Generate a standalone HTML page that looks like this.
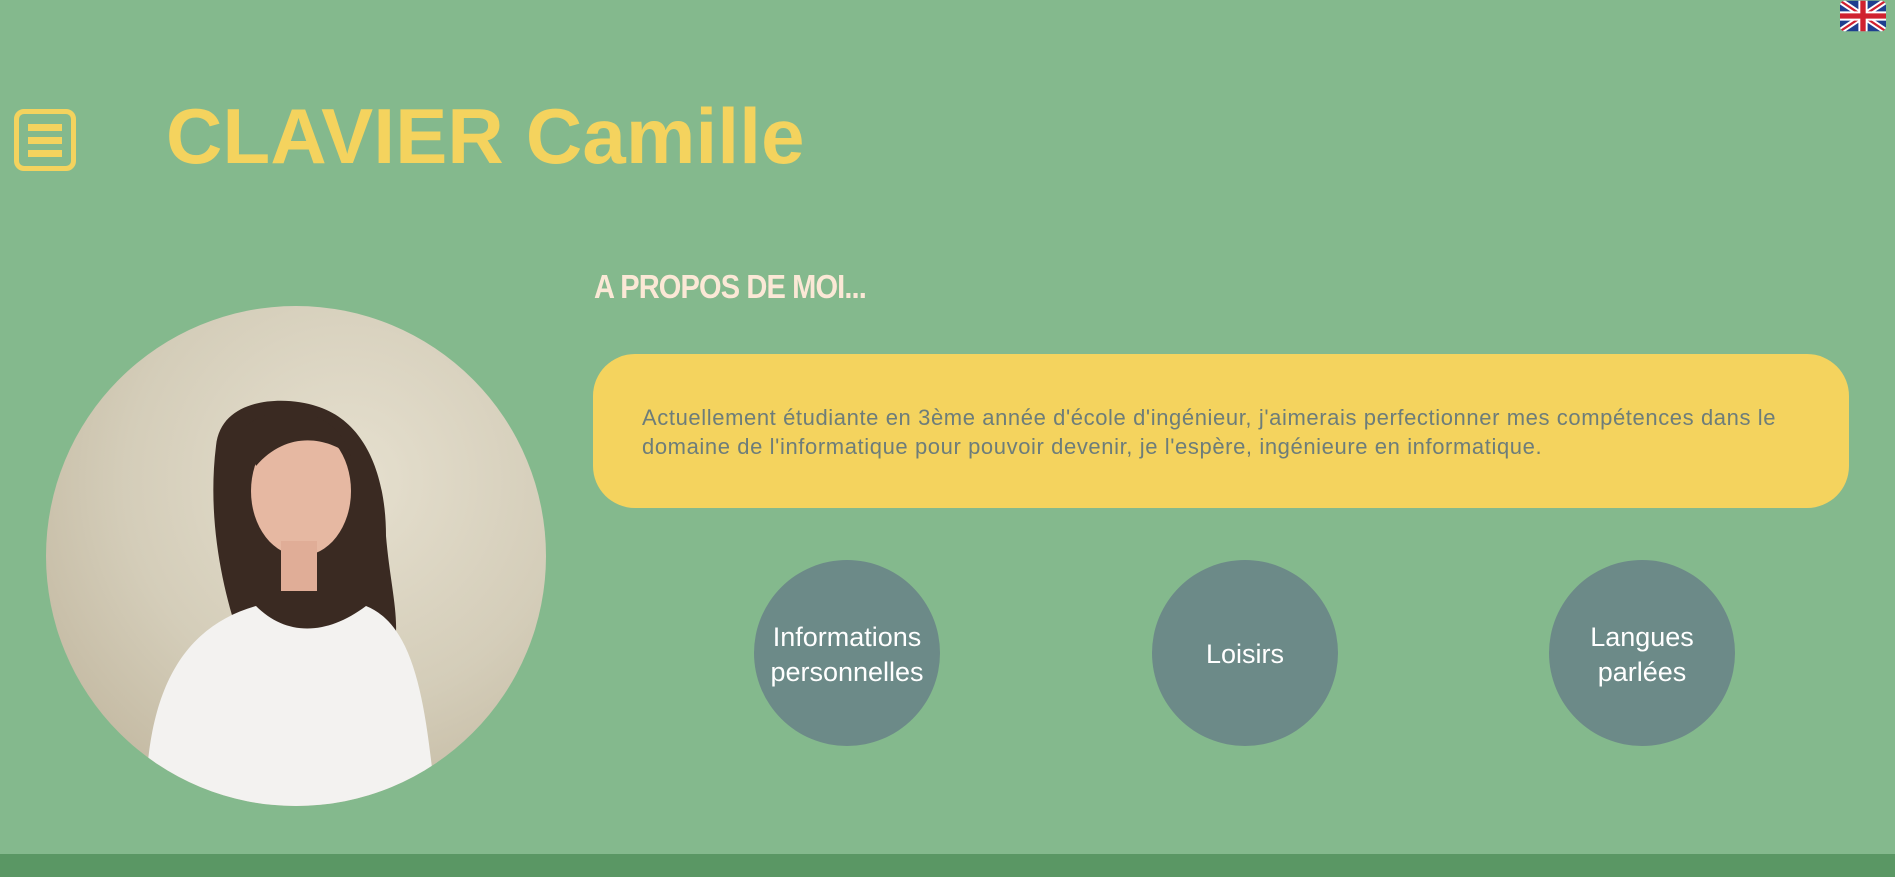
<!DOCTYPE html>
<html><head><meta charset="utf-8"><style>
html,body{margin:0;padding:0}
body{width:1895px;height:877px;background:#84b98d;position:relative;overflow:hidden;font-family:"Liberation Sans","DejaVu Sans",sans-serif}
.abs{position:absolute}
.menu{left:14px;top:109px;width:62px;height:62px;border:5px solid #f4d35e;border-radius:10px;box-sizing:border-box}
.menu i{position:absolute;left:9px;width:34px;height:7px;background:#f4d35e}
.title{left:166px;top:91px;font-size:78px;font-weight:bold;color:#f4d35e;letter-spacing:0.2px;white-space:nowrap}
.apropos{left:594px;top:268px;font-size:33px;font-weight:bold;color:#fbe8d6;transform:scaleX(.88);transform-origin:left top;white-space:nowrap;letter-spacing:-1px}
.box{left:593px;top:354px;width:1256px;height:154px;background:#f4d35e;border-radius:42px}
.txt{left:642px;top:403px;width:1190px;font-size:22px;letter-spacing:0.6px;line-height:29px;color:#6d7d7a}
.c{width:186px;height:186px;border-radius:50%;background:#6c8a88;top:560px;color:#fff;font-size:27px;line-height:35px;display:flex;align-items:center;justify-content:center;text-align:center;padding-top:3px;box-sizing:border-box}
.photo{left:46px;top:306px;width:500px;height:500px;border-radius:50%;overflow:hidden;background:radial-gradient(circle at 60% 35%,#e6e0cf,#d4cdb9 50%,#bfb49c 90%)}
.bar{left:0;top:854px;width:1895px;height:23px;background:#5a9764}
</style></head><body>
<div class="abs menu"><i style="top:10px"></i><i style="top:23px"></i><i style="top:36px"></i></div>
<div class="abs title">CLAVIER Camille</div>
<svg class="abs" style="left:1840px;top:0" width="46" height="32" viewBox="0 0 60 40">
<defs><clipPath id="f"><rect width="60" height="40" rx="6"/></clipPath></defs>
<g clip-path="url(#f)"><rect width="60" height="40" fill="#1f3f8f"/>
<path d="M0 0L60 40M60 0L0 40" stroke="#fff" stroke-width="8"/>
<path d="M0 0L60 40M60 0L0 40" stroke="#d0212f" stroke-width="3"/>
<path d="M30 0V40M0 20H60" stroke="#fff" stroke-width="12"/>
<path d="M30 0V40M0 20H60" stroke="#d0212f" stroke-width="7"/></g></svg>
<div class="abs apropos">A PROPOS DE MOI...</div>
<div class="abs box"></div>
<div class="abs txt">Actuellement étudiante en 3ème année d'école d'ingénieur, j'aimerais perfectionner mes compétences dans le domaine de l'informatique pour pouvoir devenir, je l'espère, ingénieure en informatique.</div>
<div class="abs c" style="left:754px">Informations<br>personnelles</div>
<div class="abs c" style="left:1152px">Loisirs</div>
<div class="abs c" style="left:1549px">Langues<br>parlées</div>
<div class="abs photo">
<svg width="500" height="500" viewBox="0 0 500 500">
<path d="M170 140C175 90 240 90 270 100C320 115 340 170 340 230C345 290 360 330 340 360C300 380 240 370 200 350C180 300 160 220 170 140Z" fill="#3a2a22"/>
<ellipse cx="255" cy="185" rx="50" ry="65" fill="#e6b8a2"/>
<path d="M200 120C230 95 290 100 305 150C280 130 240 125 210 160Z" fill="#3a2a22"/>
<rect x="235" y="235" width="36" height="50" fill="#e0ad97"/>
<path d="M100 500C100 380 140 320 210 300C240 330 280 330 320 300C370 320 380 400 390 500Z" fill="#f3f2f0"/>
</svg></div>
<div class="abs bar"></div>
</body></html>
